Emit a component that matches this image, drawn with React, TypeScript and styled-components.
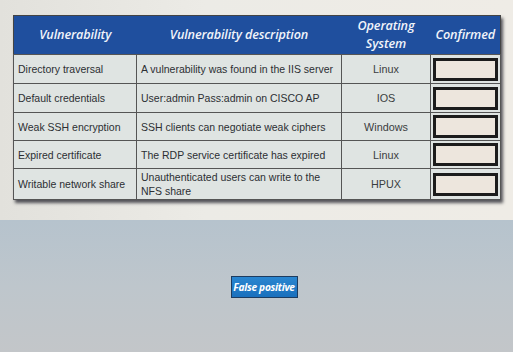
import React from "react"
import styled, { createGlobalStyle } from 'styled-components'

const GlobalStyle = createGlobalStyle`
html, body {
    margin: 0;
    padding: 0;
    width: 513px;
    height: 352px;
    overflow: hidden;
}
body {
    font-family: "Liberation Sans", Arial, sans-serif;
}
`

type Finding = {
    name: string
    description: string
    os: string
    height: number
}

const findings: Finding[] = [
    { name: 'Directory traversal', description: 'A vulnerability was found in the IIS server', os: 'Linux', height: 29 },
    { name: 'Default credentials', description: 'User:admin Pass:admin on CISCO AP', os: 'IOS', height: 29 },
    { name: 'Weak SSH encryption', description: 'SSH clients can negotiate weak ciphers', os: 'Windows', height: 28 },
    { name: 'Expired certificate', description: 'The RDP service certificate has expired', os: 'Linux', height: 28 },
    { name: 'Writable network share', description: 'Unauthenticated users can write to the NFS share', os: 'HPUX', height: 31 },
]

const App: React.FC = () => (
    <Page>
        <GlobalStyle />
        <Sheet>
            <Table>
                <colgroup>
                    <col style={{ width: 123 }} />
                    <col style={{ width: 205 }} />
                    <col style={{ width: 89 }} />
                    <col style={{ width: 70 }} />
                </colgroup>
                <thead>
                    <tr>
                        <Th>Vulnerability</Th>
                        <Th>Vulnerability description</Th>
                        <Th>Operating<br />System</Th>
                        <Th>Confirmed</Th>
                    </tr>
                </thead>
                <tbody>
                    {findings.map(f => (
                        <Row key={f.name} $h={f.height}>
                            <Td>{f.name}</Td>
                            <Td>{f.description}</Td>
                            <OsCell>{f.os}</OsCell>
                            <BoxCell><CheckBox /></BoxCell>
                        </Row>
                    ))}
                </tbody>
            </Table>
        </Sheet>
        <Drop>
            <FalseBtn>False positive</FalseBtn>
        </Drop>
    </Page>
)

const Page = styled.div`
width: 513px;
height: 352px;
display: flex;
flex-direction: column;
`

const Sheet = styled.div`
height: 220px;
box-sizing: border-box;
padding: 15px 13px 0 13px;
background: linear-gradient(90deg, #e2e1dc 0%, #ecebe6 40%, #efece6 100%);
`

const Table = styled.table`
width: 487px;
table-layout: fixed;
border-collapse: collapse;
background: #dfe4e2;
box-shadow: 2px 3px 3px rgba(20, 20, 30, 0.7);
border: 1px solid #444;
`

const Th = styled.th`
height: 38px;
padding: 0 3px;
background: #1f4f9e;
color: #f1f4fa;
font-family: "Open Sans", "Noto Sans", sans-serif;
font-style: italic;
font-weight: 600;
font-size: 12.6px;
line-height: 18px;
letter-spacing: -0.1px;
text-align: center;
border: none;
`

const Row = styled.tr<{ $h: number }>`
height: ${p => p.$h}px;
`

const Td = styled.td`
padding: 0 4px;
border: 1px solid #555;
color: #2c2f33;
font-size: 10.5px;
line-height: 14px;
vertical-align: middle;
`

const OsCell = styled(Td)`
&& {
    text-align: center;
    font-size: 10.8px;
    color: #3a3d40;
}
`

const BoxCell = styled(Td)`
&& {
    padding: 0 2px;
}
`

const CheckBox = styled.div`
height: 17px;
border: 3px solid #1c1c1c;
background: #ede6dd;
`

const Drop = styled.div`
flex: 1;
display: flex;
align-items: center;
justify-content: center;
padding: 1px 0 0 15px;
background: linear-gradient(180deg, #b6c3cd 0%, #bec6cc 50%, #c3c6c9 100%);
`

const FalseBtn = styled.button`
width: 67px;
height: 22px;
padding: 0;
border: 1px solid #1d3c60;
background: linear-gradient(180deg, #2a86d0 0%, #1a70bd 100%);
color: #fff;
font-family: "Open Sans", "Noto Sans", sans-serif;
font-style: italic;
font-weight: 700;
font-size: 10.2px;
letter-spacing: -0.3px;
white-space: nowrap;
cursor: pointer;
`

export default App
